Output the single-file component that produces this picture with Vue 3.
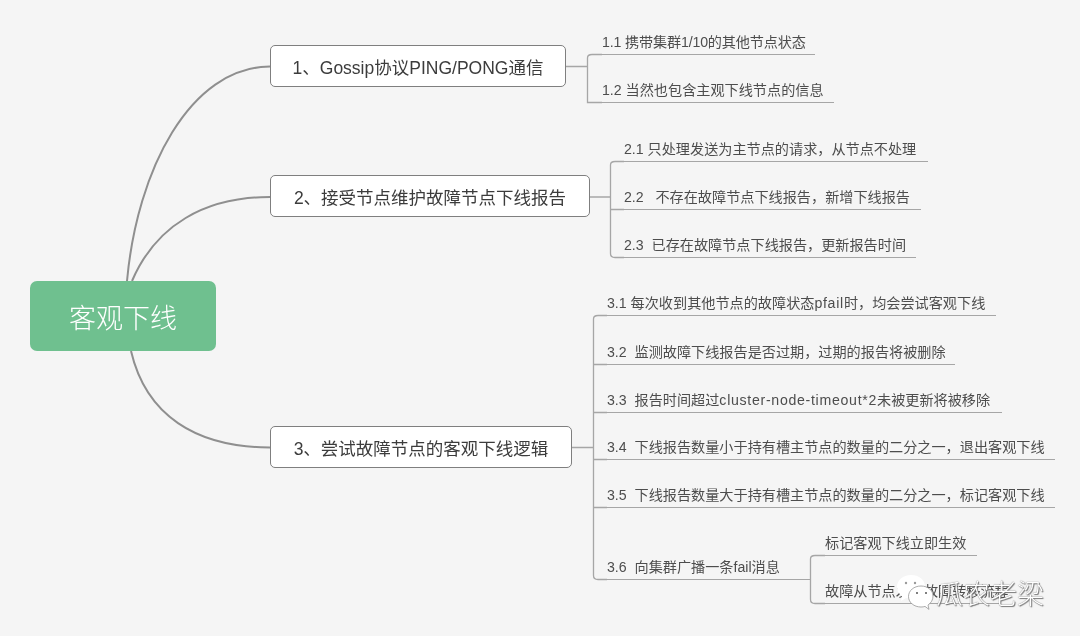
<script setup>
const branches = [
  'M127 281C137 170 190 67 270 66.500',
  'M132 281C156 225 205 197 270 197',
  'M131 351C146 415 195 447 270 447.500',
]
const nodes = [
  { text: '1、Gossip协议PING/PONG通信', x: 270, y: 45, w: 296, h: 42 },
  { text: '2、接受节点维护故障节点下线报告', x: 270, y: 175, w: 320, h: 42 },
  { text: '3、尝试故障节点的客观下线逻辑', x: 270, y: 426, w: 302, h: 42 },
]
const leaves = [
  { text: '1.1 携带集群1/10的其他节点状态', x: 602, y: 54, end: 815, tight: true },
  { text: '1.2 当然也包含主观下线节点的信息', x: 602, y: 102, end: 834 },
  { text: '2.1 只处理发送为主节点的请求，从节点不处理', x: 624, y: 161, end: 928 },
  { text: '2.2   不存在故障节点下线报告，新增下线报告', x: 624, y: 209, end: 921 },
  { text: '2.3  已存在故障节点下线报告，更新报告时间', x: 624, y: 257, end: 916 },
  { text: '3.1 每次收到其他节点的故障状态', code: 'pfail', rest: '时，均会尝试客观下线', x: 607, y: 315, end: 996 },
  { text: '3.2  监测故障下线报告是否过期，过期的报告将被删除', x: 607, y: 364, end: 955 },
  { text: '3.3  报告时间超过', code: 'cluster-node-timeout*2', rest: '未被更新将被移除', x: 607, y: 412, end: 1002 },
  { text: '3.4  下线报告数量小于持有槽主节点的数量的二分之一，退出客观下线', x: 607, y: 459, end: 1055 },
  { text: '3.5  下线报告数量大于持有槽主节点的数量的二分之一，标记客观下线', x: 607, y: 507, end: 1055 },
  { text: '3.6  向集群广播一条fail消息', x: 607, y: 579, end: 810 },
  { text: '标记客观下线立即生效', x: 825, y: 555, end: 977 },
  { text: '故障从节点发起故障转移流程', x: 825, y: 603, end: 1000 },
]
const brackets = [
  'M566 66.500H587.500M587.500 58Q587.500 54.500 592 54.500H602M587.500 58V102.500H602',
  'M590 197H610.500M610.500 165Q610.500 161.500 615 161.500H624M610.500 165V253.500Q610.500 257.500 615 257.500H624M610.500 209.500H624',
  'M572 447.500H593.500M593.500 319Q593.500 315.500 598 315.500H607M593.500 319V575.500Q593.500 579.500 598 579.500H607M593.500 364.500H607M593.500 412.500H607M593.500 459.500H607M593.500 507.500H607',
  'M810.500 559Q810.500 555.500 815 555.500H825M810.500 559V599.500Q810.500 603.500 815 603.500H825',
]
</script>

<template>
  <main class="canvas">
    <svg class="lines" width="1080" height="636" viewBox="0 0 1080 636" fill="none">
      <path v-for="d in branches" :key="d" :d="d" class="branch" />
      <path v-for="d in brackets" :key="d" :d="d" class="bracket" />
    </svg>

    <div class="root">客观下线</div>

    <div
      v-for="n in nodes"
      :key="n.text"
      class="node"
      :style="{ left: n.x + 'px', top: n.y + 'px', width: n.w + 'px', height: n.h + 'px' }"
    >{{ n.text }}</div>

    <div
      v-for="l in leaves"
      :key="l.text"
      class="leaf"
      :class="{ tight: l.tight }"
      :style="{ left: l.x + 'px', top: l.y - 25 + 'px', width: l.end - l.x + 'px' }"
    >{{ l.text }}<span v-if="l.code" class="code">{{ l.code }}</span>{{ l.rest }}</div>

    <div class="mark">
      <svg class="mark-icon" width="42" height="38" viewBox="0 0 42 38">
        <path d="M16 1C8 1 2 6 2 13c0 4 2 7 5 9l-1 5 5-3c2 .6 3 .8 5 .8 8 0 14-5 14-12S24 1 16 1Z" fill="#fff" />
        <path d="M26 12c-7 0-12.500 4.500-12.500 10.500S19 33 26 33c1.500 0 3-.2 4-.6l4 3-1-4.400c3-2 5-5 5-9 0-5.500-5-10-12-10Z" fill="#fff" stroke="#8a8a8a" stroke-width=".7" />
        <circle cx="11" cy="9" r="1.200" fill="#9a9a9a" />
        <circle cx="20" cy="9" r="1.200" fill="#9a9a9a" />
        <circle cx="22" cy="19" r="1" fill="#555" />
        <circle cx="31" cy="19" r="1" fill="#555" />
      </svg>
      <span class="mark-text">瓜农老梁</span>
    </div>
  </main>
</template>

<style>
html, body { background: #fff; }
</style>

<style scoped>
.canvas {
  position: relative;
  width: 1080px;
  height: 636px;
  overflow: hidden;
  background: #f5f5f5;
  font-family: "Liberation Sans", "Noto Sans CJK SC", sans-serif;
  filter: blur(0.45px);
}
.lines {
  position: absolute;
  left: 0;
  top: 0;
}
.branch {
  stroke: #8f8f8f;
  stroke-width: 2;
}
.bracket {
  stroke: #a6a6a6;
  stroke-width: 1.300;
}
.root {
  position: absolute;
  left: 30px;
  top: 281px;
  width: 186px;
  height: 70px;
  box-sizing: border-box;
  display: flex;
  align-items: center;
  justify-content: center;
  border-radius: 7px;
  background: #6fc08f;
  color: #fff;
  font-size: 27px;
  font-weight: 300;
  font-family: "Noto Sans CJK SC", sans-serif;
}
.node {
  position: absolute;
  box-sizing: border-box;
  display: flex;
  align-items: center;
  justify-content: center;
  border: 1.500px solid #7f7f7f;
  border-radius: 5px;
  background: #fff;
  color: #3c3c3c;
  font-size: 17.500px;
  white-space: pre;
}
.leaf {
  position: absolute;
  height: 26px;
  padding-top: 2px;
  line-height: 22px;
  border-bottom: 1.300px solid #a6a6a6;
  box-sizing: border-box;
  color: #4d4d4d;
  font-size: 14.150px;
  white-space: pre;
}
.tight {
  letter-spacing: -0.15px;
}
.code {
  letter-spacing: 0.7px;
}
.mark {
  position: absolute;
  left: 895px;
  top: 574px;
  display: flex;
  align-items: center;
}
.mark-text {
  margin-left: -1px;
  color: #fff;
  font-size: 27px;
  font-weight: 300;
  line-height: 36px;
  text-shadow: 0 0 1px #555, 1px 1px 1px #777;
  font-family: "Noto Sans CJK SC", sans-serif;
}
</style>
